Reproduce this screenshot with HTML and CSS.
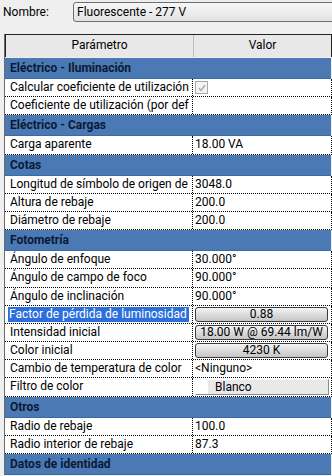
FILE: index.html
```html
<!DOCTYPE html>
<html lang="es">
<head>
<meta charset="utf-8">
<link rel="stylesheet" href="styles.css">
</head>
<body>
<div class="top">
  <span class="lbl">Nombre:</span>
  <div class="combo">Fluorescente - 277 V</div>
</div>
<div class="grid">
  <div class="head"><div class="hk">Parámetro</div><div class="hv">Valor</div></div>

  <div class="band">Eléctrico - Iluminación</div>
  <div class="row"><div class="k">Calcular coeficiente de utilización</div><div class="v"><span class="chk"><svg width="10" height="10" viewBox="0 0 10 10"><path d="M2 5.2 L4 7.5 L8 2" fill="none" stroke="#a8a8a8" stroke-width="1.4"/></svg></span></div></div>
  <div class="row"><div class="k">Coeficiente de utilización (por def</div><div class="v"></div></div>

  <div class="band">Eléctrico - Cargas</div>
  <div class="row"><div class="k">Carga aparente</div><div class="v">18.00 VA</div></div>

  <div class="band">Cotas</div>
  <div class="row"><div class="k">Longitud de símbolo de origen de</div><div class="v">3048.0</div></div>
  <div class="row"><div class="k">Altura de rebaje</div><div class="v">200.0</div></div>
  <div class="row"><div class="k">Diámetro de rebaje</div><div class="v">200.0</div></div>

  <div class="band">Fotometría</div>
  <div class="row"><div class="k">Ángulo de enfoque</div><div class="v">30.000°</div></div>
  <div class="row"><div class="k">Ángulo de campo de foco</div><div class="v">90.000°</div></div>
  <div class="row"><div class="k">Ángulo de inclinación</div><div class="v">90.000°</div></div>
  <div class="row"><div class="k"><span class="sel">Factor de pérdida de luminosidad</span></div><div class="v"><span class="btn">0.88</span></div></div>
  <div class="row"><div class="k">Intensidad inicial</div><div class="v"><span class="btn">18.00 W @ 69.44 lm/W</span></div></div>
  <div class="row"><div class="k">Color inicial</div><div class="v"><span class="btn">4230 K</span></div></div>
  <div class="row"><div class="k">Cambio de temperatura de color</div><div class="v">&lt;Ninguno&gt;</div></div>
  <div class="row"><div class="k">Filtro de color</div><div class="v"><span class="flat"><span class="sw"></span><span class="ft">Blanco</span></span></div></div>

  <div class="band">Otros</div>
  <div class="row"><div class="k">Radio de rebaje</div><div class="v">100.0</div></div>
  <div class="row"><div class="k">Radio interior de rebaje</div><div class="v">87.3</div></div>

  <div class="band">Datos de identidad</div>
</div>
</body>
</html>
```
FILE: styles.css
```css
html, body {
  margin: 0;
  padding: 0;
  background: #efefef;
  overflow: hidden;
  font-family: Roboto, "Liberation Sans", sans-serif;
  font-size: 12px;
  color: #000;
}
.top {
  height: 34px;
  display: flex;
  align-items: flex-start;
  padding-top: 2px;
  box-sizing: border-box;
}
.lbl {
  width: 73px;
  padding-left: 3px;
  box-sizing: border-box;
  line-height: 20px;
}
.combo {
  flex: 1;
  margin-right: -12px;
  height: 20px;
  box-sizing: border-box;
  border: 1px solid #6f6f6f;
  border-radius: 3px 0 0 3px;
  background: linear-gradient(#f7f7f7, #e3e3e3);
  padding-left: 3px;
  line-height: 18px;
}
.grid {
  margin-left: 4px;
  width: 327px;
  border-left: 1px solid #6a6a6a;
}
.head {
  display: grid;
  grid-template-columns: 188px 1fr;
  height: 23px;
  box-sizing: border-box;
  border-top: 1px solid #222;
  border-left: 1px solid #222;
  border-right: 1px solid #222;
  background: #e8e8e8;
  line-height: 21px;
  text-align: center;
  margin-bottom: 1px;
}
.hk { border-right: 1px solid #bcbcbc; }
.band {
  height: 21px;
  background: #4a79b4;
  color: #0b1935;
  font-weight: bold;
  line-height: 20px;
  padding-left: 5px;
  margin-right: 1px;
  box-sizing: border-box;
  border-bottom: 1px solid #3a6aa6;
}
.row {
  display: grid;
  grid-template-columns: 188px 1fr;
  height: 18.2px;
  box-sizing: border-box;
  background: #fff;
  border-bottom: 1px dotted #000;
  border-right: 1px dotted #000;
  line-height: 17px;
}
.k {
  padding-left: 5px;
  border-right: 1px dotted #000;
  white-space: nowrap;
  overflow: hidden;
}
.v {
  padding-left: 2px;
  white-space: nowrap;
  display: flex;
  align-items: center;
}
.sel {
  background: #2c6fdc;
  color: #fff;
  padding: 0 2px 1px 1px;
  margin-left: -2px;
}
.chk {
  width: 11px;
  height: 11px;
  border: 1px solid #a9a9a9;
  background: #f3f3f3;
  display: flex;
  align-items: center;
  justify-content: center;
}
.btn {
  flex: 1;
  margin-right: 3px;
  height: 15px;
  box-sizing: border-box;
  border: 1px solid #3a3a3a;
  border-radius: 3px;
  background: linear-gradient(#f5f5f5, #d9d9d9 55%, #c6c6c6);
  text-align: center;
  line-height: 13px;
}
.flat {
  flex: 1;
  margin-right: 2px;
  height: 16px;
  box-sizing: border-box;
  border: 1px solid;
  border-color: #fbfbfb #8a8a8a #8a8a8a #fbfbfb;
  background: #e9e9e9;
  display: flex;
  align-items: center;
}
.sw {
  width: 12px;
  height: 14px;
  background: #fff;
}
.ft { padding-left: 7px; }
```
